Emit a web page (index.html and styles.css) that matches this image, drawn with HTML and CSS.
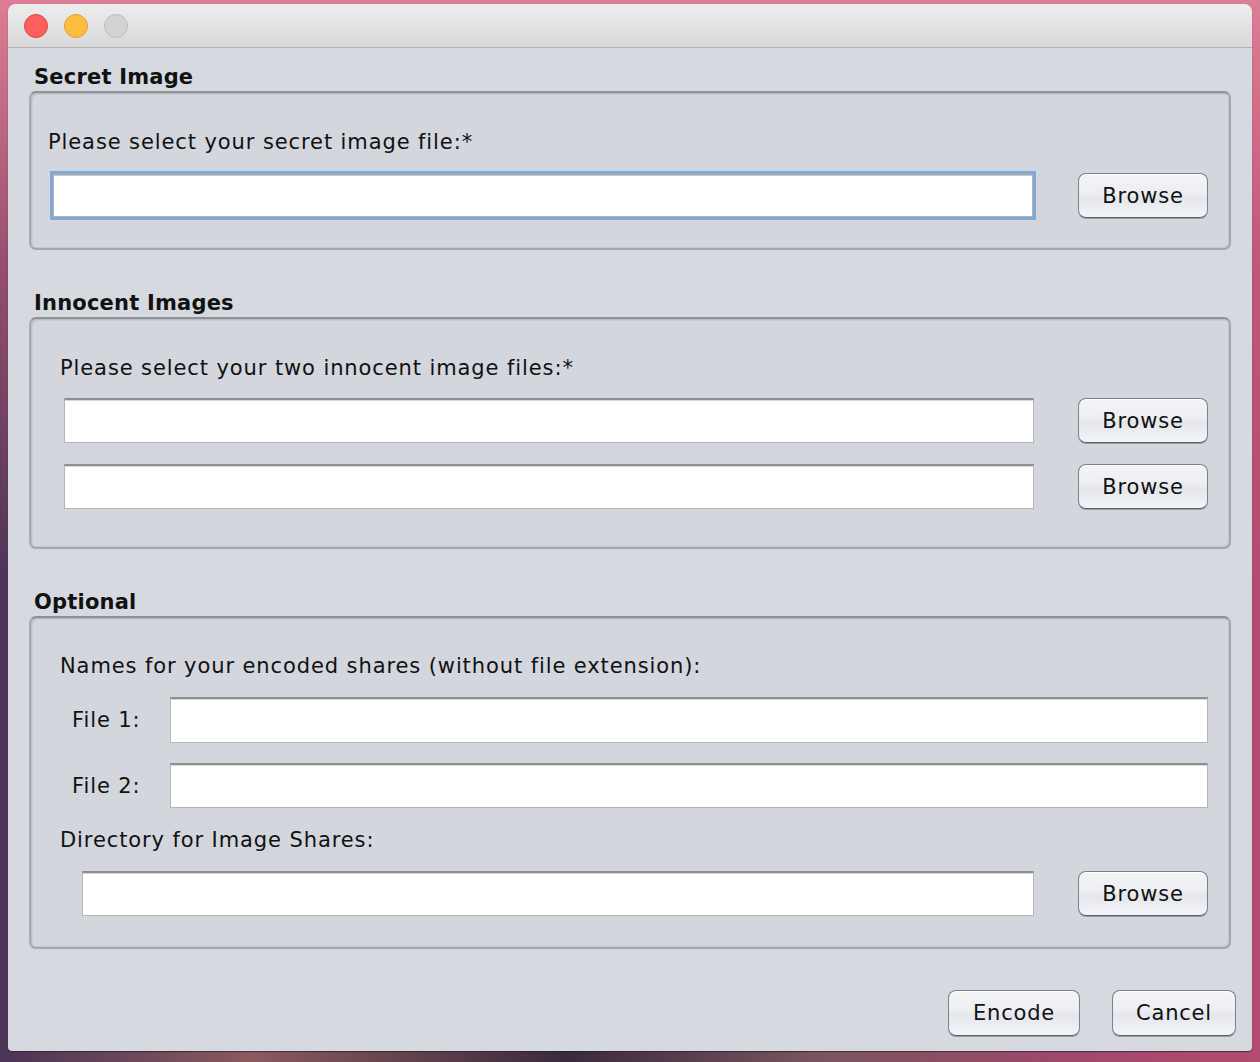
FILE: index.html
```html
<!DOCTYPE html>
<html>
<head>
<meta charset="utf-8">
<link rel="stylesheet" href="styles.css">
</head>
<body>
<div class="window">
  <div class="titlebar">
    <span class="light red"></span>
    <span class="light yellow"></span>
    <span class="light gray"></span>
  </div>
  <div class="content">
    <div class="section">
      <div class="heading">Secret Image</div>
      <div class="panel p1">
        <div class="label">Please select your secret image file:*</div>
        <div class="row r1">
          <div class="field focused f-secret"></div>
          <button class="btn browse b42">Browse</button>
        </div>
      </div>
    </div>
    <div class="section gap">
      <div class="heading">Innocent Images</div>
      <div class="panel p2">
        <div class="label ml12">Please select your two innocent image files:*</div>
        <div class="row r2a">
          <div class="field f-inn"></div>
          <button class="btn browse b44">Browse</button>
        </div>
        <div class="row r2b">
          <div class="field f-inn"></div>
          <button class="btn browse b44">Browse</button>
        </div>
      </div>
    </div>
    <div class="section gap">
      <div class="heading">Optional</div>
      <div class="panel p3">
        <div class="label ml12">Names for your encoded shares (without file extension):</div>
        <div class="row r3a">
          <div class="flabel">File 1:</div>
          <div class="field f-name"></div>
        </div>
        <div class="row r3b">
          <div class="flabel">File 2:</div>
          <div class="field f-name"></div>
        </div>
        <div class="label ml12 dirlabel">Directory for Image Shares:</div>
        <div class="row r3c">
          <div class="field f-dir"></div>
          <button class="btn browse b44">Browse</button>
        </div>
      </div>
    </div>
  </div>
  <div class="footer">
    <button class="btn encode">Encode</button>
    <button class="btn cancel">Cancel</button>
  </div>
</div>
</body>
</html>
```
FILE: styles.css
```css
html, body {
  margin: 0;
  padding: 0;
  width: 1260px;
  height: 1062px;
  overflow: hidden;
}
body {
  background:
    linear-gradient(to bottom, rgba(222,125,150,1) 0, rgba(200,95,125,0.6) 25%, rgba(200,95,125,0) 55%),
    linear-gradient(to right, #4b3456 0, #8a5a5e 20%, #3a2a3c 45%, #7a5560 65%, #a0486a 85%, #b24c70 100%);
  font-family: "DejaVu Sans", Verdana, sans-serif;
  color: #111;
}
.window {
  position: relative;
  margin: 4px 0 0 8px;
  width: 1244px;
  height: 1047px;
  background: #d6d9e0;
  border-radius: 8px 8px 4px 4px;
  display: flex;
  flex-direction: column;
  overflow: hidden;
  box-shadow: 0 1px 1px rgba(40,30,40,0.7);
}
.titlebar {
  height: 43px;
  flex: none;
  background: linear-gradient(to bottom, #ededed, #d9d9d9);
  border-bottom: 1px solid #b1b1b1;
  display: flex;
  align-items: center;
  gap: 16px;
  padding-left: 16px;
}
.light {
  width: 24px;
  height: 24px;
  border-radius: 50%;
  box-sizing: border-box;
  display: block;
  margin-top: 1px;
}
.red { background: #fc605c; border: 1px solid #e0443f; }
.yellow { background: #fdbc40; border: 1px solid #dea034; }
.gray { background: #d3d3d3; border: 1px solid #bcbcbc; }

.content {
  padding: 14px 21px 0 21px;
  display: flex;
  flex-direction: column;
}
.section.gap { margin-top: 38px; }
.heading {
  font-weight: bold;
  font-size: 21px;
  line-height: 26px;
  padding-left: 5px;
  padding-top: 2px;
  letter-spacing: 0.2px;
}
.panel {
  margin-top: 1px;
  border: 2px solid #a3a6ab;
  border-top-color: #8e9195;
  border-left-color: #a8abb0;
  border-radius: 7px;
  background: #d3d6dd;
  box-shadow: inset 1px 1px 0 #b9bcc2, inset 2px 2px 0 #c8cbd1, inset -1px -1px 0 #c4c7cd;
  padding: 36px 21px 28px 17px;
  display: flex;
  flex-direction: column;
}
.p2 { padding-bottom: 38px; }
.p3 { padding-top: 35px; padding-bottom: 31px; }

.label {
  font-size: 21px;
  line-height: 26px;
  letter-spacing: 0.9px;
}
.ml12 { margin-left: 12px; }
.row {
  display: flex;
  align-items: center;
}
.r1 { margin-top: 16px; }
.r2a { margin-top: 17px; }
.r2b { margin-top: 21px; }
.r3a { margin-top: 18px; }
.r3b { margin-top: 20px; }
.dirlabel { margin-top: 19px; }
.r3c { margin-top: 18px; }

.field {
  flex: 1;
  height: 45px;
  box-sizing: border-box;
  background: #fff;
  border: 1px solid #b4b4b4;
  border-top: 2px solid #8f8f8f;
  box-shadow: inset 0 1px 0 #d8d8d8;
}
.field.focused {
  height: 49px;
  margin-left: 2px;
  border: 3px solid #7fa9da;
  box-shadow: inset 0 0 0 1px #b0b0b0, inset 0 2px 0 #c8c8c8;
}
.f-inn { margin-left: 16px; }
.f-name { height: 46px; }
.r3b .f-name { height: 45px; }
.f-dir { margin-left: 34px; }
.flabel {
  width: 98px;
  margin-left: 24px;
  font-size: 21px;
  line-height: 26px;
  letter-spacing: 0.9px;
  flex: none;
}

.btn {
  font-family: "DejaVu Sans", Verdana, sans-serif;
  font-size: 21px;
  letter-spacing: 0.8px;
  color: #111;
  height: 45px;
  box-sizing: border-box;
  border: 1px solid #7e8085;
  border-bottom-color: #5e6064;
  border-radius: 8px;
  background: linear-gradient(to bottom, #f4f4f6 0%, #eceef2 45%, #e4e6eb 55%, #f3f5fa 100%);
  box-shadow: 0 1px 0 #9a9ca0, inset 0 1px 0 #ffffff;
  padding: 0;
  flex: none;
}
.browse { width: 130px; }
.b42 { margin-left: 42px; }
.b44 { margin-left: 44px; }

.footer {
  margin-top: auto;
  display: flex;
  justify-content: flex-end;
  gap: 32px;
  padding: 0 16px 15px 0;
}
.encode { width: 132px; height: 46px; }
.cancel { width: 124px; height: 46px; }
```
